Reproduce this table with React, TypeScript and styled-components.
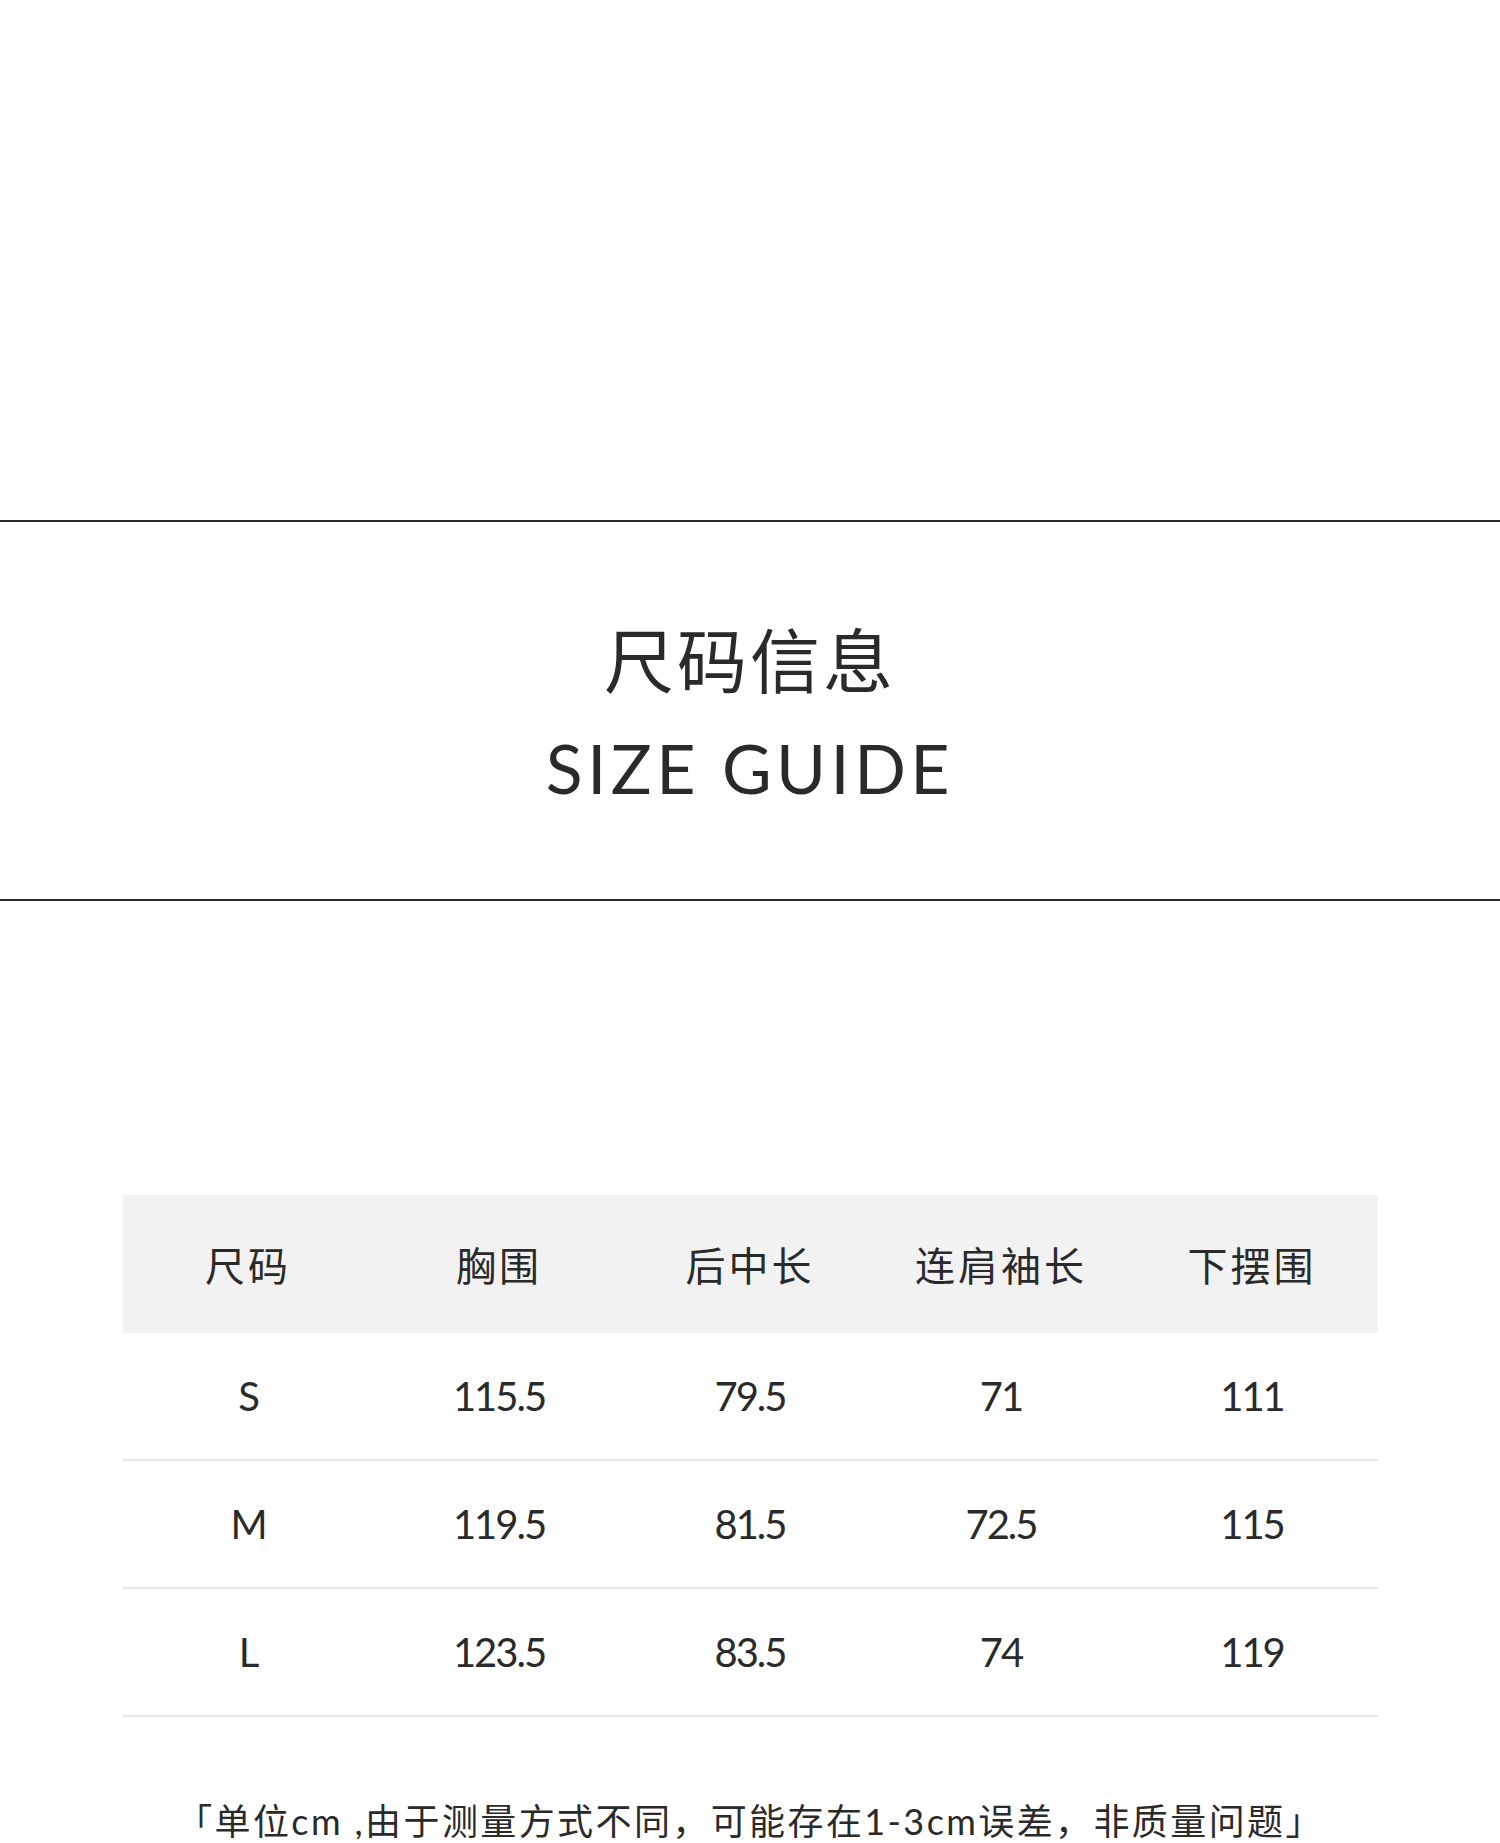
import styled, { createGlobalStyle } from "styled-components";

const GlobalStyle = createGlobalStyle`
  html, body {
    margin: 0;
    padding: 0;
    background: #ffffff;
  }
  body {
    font-family: Lato, "Noto Sans CJK SC", sans-serif;
    color: #2b2b2b;
  }
`;

const cjk = `Lato, "Noto Sans CJK SC", sans-serif`;

const headers = ["尺码", "胸围", "后中长", "连肩袖长", "下摆围"];

const rows = [
  ["S", "115.5", "79.5", "71", "111"],
  ["M", "119.5", "81.5", "72.5", "115"],
  ["L", "123.5", "83.5", "74", "119"],
];

export default function App() {
  return (
    <>
      <GlobalStyle />
      <Page>
        <Rule />
        <TitleBlock>
          <TitleCn>尺码信息</TitleCn>
          <TitleEn>SIZE GUIDE</TitleEn>
        </TitleBlock>
        <Rule />

        <Table>
          <HeadRow>
            {headers.map((h) => (
              <HeadCell key={h}>{h}</HeadCell>
            ))}
          </HeadRow>
          {rows.map((r) => (
            <BodyRow key={r[0]}>
              {r.map((v, i) => (
                <Cell key={i}>{v}</Cell>
              ))}
            </BodyRow>
          ))}
        </Table>

        <Note>「单位cm ,由于测量方式不同，可能存在1-3cm误差，非质量问题」</Note>
      </Page>
    </>
  );
}

const Page = styled.div`
  width: 1500px;
  padding-top: 520px;
  box-sizing: border-box;
  display: flex;
  flex-direction: column;
`;

const Rule = styled.div`
  height: 2px;
  background: #2a2a2a;
  flex-shrink: 0;
`;

const TitleBlock = styled.div`
  height: 377px;
  flex-shrink: 0;
  box-sizing: border-box;
  padding-top: 96px;
  display: flex;
  flex-direction: column;
  align-items: center;
  gap: 29px;
`;

const TitleCn = styled.div`
  font-family: "Noto Sans CJK SC", sans-serif;
  font-size: 70px;
  line-height: 80px;
  color: #2a2a2a;
  letter-spacing: 3px;
`;

const TitleEn = styled.div`
  font-family: Lato, sans-serif;
  font-size: 68px;
  line-height: 82px;
  color: #2a2a2a;
  letter-spacing: 4.5px;
`;

const Table = styled.div`
  width: 1255px;
  margin: 294px auto 0;
  display: flex;
  flex-direction: column;
  flex-shrink: 0;
`;

const HeadRow = styled.div`
  display: grid;
  grid-template-columns: repeat(5, 1fr);
  height: 138px;
  background: #f2f2f2;
  align-items: center;
`;

const HeadCell = styled.div`
  text-align: center;
  font-family: ${cjk};
  font-size: 40px;
  letter-spacing: 3px;
  color: #2a2a2a;
`;

const BodyRow = styled.div`
  display: grid;
  grid-template-columns: repeat(5, 1fr);
  height: 126px;
  align-items: center;
  border-bottom: 2px solid #e6e6e6;
`;

const Cell = styled.div`
  text-align: center;
  font-family: Lato, sans-serif;
  font-size: 40px;
  letter-spacing: -2px;
  color: #2a2a2a;
`;

const Note = styled.div`
  margin-top: 86px;
  text-align: center;
  font-family: ${cjk};
  font-size: 36px;
  line-height: 36px;
  letter-spacing: 2.4px;
  color: #2a2a2a;
  white-space: nowrap;
  flex-shrink: 0;
`;
